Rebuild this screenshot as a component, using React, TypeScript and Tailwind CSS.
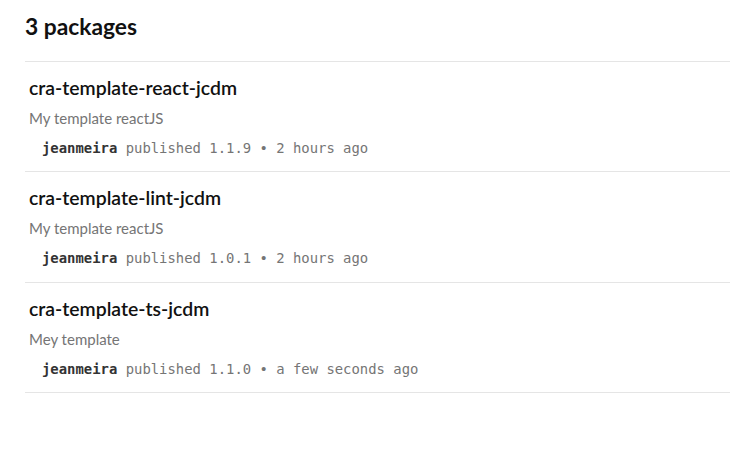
import React from "react";

type Pkg = {
  name: string;
  description: string;
  publisher: string;
  version: string;
  when: string;
};

const packages: Pkg[] = [
  {
    name: "cra-template-react-jcdm",
    description: "My template reactJS",
    publisher: "jeanmeira",
    version: "1.1.9",
    when: "2 hours ago",
  },
  {
    name: "cra-template-lint-jcdm",
    description: "My template reactJS",
    publisher: "jeanmeira",
    version: "1.0.1",
    when: "2 hours ago",
  },
  {
    name: "cra-template-ts-jcdm",
    description: "Mey template",
    publisher: "jeanmeira",
    version: "1.1.0",
    when: "a few seconds ago",
  },
];

function PackageRow({ pkg }: { pkg: Pkg }) {
  return (
    <section className="border-b border-[#e5e5e5] pl-1 pt-[14px] pb-[13.4px]">
      <h3 className="text-[19.4px] leading-6 font-semibold text-[#111]">
        {pkg.name}
      </h3>
      <p className="mt-2 text-[15px] leading-5 text-[#757575]">
        {pkg.description}
      </p>
      <div className="mt-[10px] pl-[13px] font-['DejaVu_Sans_Mono',monospace] text-[13.9px] leading-5 text-[#757575]">
        <span className="font-bold text-[#333]">{pkg.publisher}</span>{" "}
        published {pkg.version} • {pkg.when}
      </div>
    </section>
  );
}

export default function App() {
  return (
    <div className="min-h-screen bg-white font-['Lato',sans-serif]">
      <div className="pl-[25px]">
        <h2 className="pt-[11px] pb-[20px] text-[22.8px] leading-[30px] font-bold text-[#111] border-b border-[#e5e5e5]">
          3 packages
        </h2>
        {packages.map((p) => (
          <PackageRow key={p.name} pkg={p} />
        ))}
      </div>
    </div>
  );
}
